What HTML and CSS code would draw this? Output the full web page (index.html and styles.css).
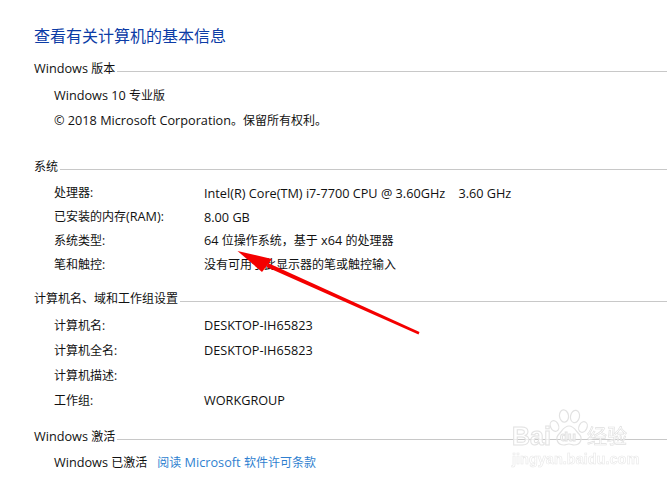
FILE: index.html
```html
<!DOCTYPE html>
<html lang="zh-CN">
<head>
<meta charset="utf-8">
<title>查看有关计算机的基本信息</title>
<link rel="stylesheet" href="styles.css">
</head>
<body>
<main class="page">
  <h1 class="title">查看有关计算机的基本信息</h1>

  <section class="section s-edition">
    <h2 class="head"><span><span class="la">Windows </span>版本</span></h2>
    <div class="plain"><span class="la">Windows 10 </span>专业版</div>
    <div class="plain"><span class="la">© 2018 Microsoft Corporation</span>。保留所有权利。</div>
  </section>

  <section class="section s-system">
    <h2 class="head"><span>系统</span></h2>
    <div class="row"><span class="key">处理器:</span><span class="la">Intel(R) Core(TM) i7-7700 CPU @ 3.60GHz&nbsp;&nbsp;&nbsp; 3.60 GHz</span></div>
    <div class="row"><span class="key">已安装的内存<span class="la">(RAM)</span>:</span><span class="la">8.00 GB</span></div>
    <div class="row"><span class="key">系统类型:</span><span><span class="la">64 </span>位操作系统，基于<span class="la"> x64 </span>的处理器</span></div>
    <div class="row"><span class="key">笔和触控:</span><span>没有可用于此显示器的笔或触控输入</span></div>
  </section>

  <section class="section s-computer">
    <h2 class="head"><span>计算机名、域和工作组设置</span></h2>
    <div class="row wide"><span class="key">计算机名:</span><span class="la">DESKTOP-IH65823</span></div>
    <div class="row wide"><span class="key">计算机全名:</span><span class="la">DESKTOP-IH65823</span></div>
    <div class="row wide"><span class="key">计算机描述:</span><span></span></div>
    <div class="row wide"><span class="key">工作组:</span><span class="la">WORKGROUP</span></div>
  </section>

  <section class="section s-activation">
    <h2 class="head"><span><span class="la">Windows </span>激活</span></h2>
    <div class="plain"><span class="la">Windows </span>已激活<a class="link" href="#">阅读<span class="la"> Microsoft </span>软件许可条款</a></div>
  </section>
</main>

<svg class="arrow" width="667" height="481" viewBox="0 0 667 481" aria-hidden="true">
  <path d="M419.5 332 L268 263 L266.5 267 L418.5 334.5 Z" fill="#f40000"/>
  <path d="M237.5 251 L272 259 L262 272 Z" fill="#f40000"/>
</svg>

<div class="mark" aria-hidden="true">
  <svg class="paw" width="40" height="38" viewBox="0 0 40 38">
    <g fill="none" stroke="#e2e2e2" stroke-width="1.2">
      <ellipse cx="5.5" cy="17" rx="4" ry="5.5" transform="rotate(-25 5.5 17)"/>
      <ellipse cx="15" cy="7" rx="4.5" ry="6.2" transform="rotate(-8 15 7)"/>
      <ellipse cx="26" cy="7.5" rx="4.5" ry="6.2" transform="rotate(12 26 7.5)"/>
      <ellipse cx="34" cy="18" rx="4" ry="5.5" transform="rotate(25 34 18)"/>
      <path d="M20 17c5 0 7 5 10 8 4 4 2 11-5 11-2 0-3-1-5-1s-3 1-5 1c-7 0-9-7-5-11 3-3 5-8 10-8z"/>
    </g>
  </svg>
  <span class="bai">Bai</span><span class="du">du</span><span class="jy">经验</span>
  <div class="url">jingyan.baidu.com</div>
</div>
</body>
</html>
```

FILE: styles.css
```css
html, body {
  margin: 0;
  padding: 0;
  background: #fff;
}
body {
  width: 667px;
  height: 481px;
  overflow: hidden;
  position: relative;
  font-family: "Open Sans", "Noto Sans CJK SC", sans-serif;
  font-size: 12px;
  color: #111;
}
.la {
  font-size: 12.7px;
  line-height: 1;
}
.row > .la {
  line-height: inherit;
}
.page {
  padding: 26px 0 0 34px;
  display: flex;
  flex-direction: column;
}
.title {
  margin: 0;
  font-size: 16px;
  font-weight: 400;
  line-height: 20px;
  color: #0c3ca6;
}
.section {
  display: flex;
  flex-direction: column;
}
.s-edition { margin-top: 13px; }
.s-system { margin-top: 24px; }
.s-computer { margin-top: 12px; }
.s-activation { margin-top: 14px; }
.head {
  margin: 0;
  font-size: 12px;
  font-weight: 400;
  line-height: 20px;
  display: flex;
  align-items: center;
  gap: 2px;
}
.head::after {
  content: "";
  flex: 1;
  height: 1px;
  background: #c8c8c8;
  margin-top: 5px;
}
.plain {
  padding-left: 20px;
  line-height: 25px;
}
.s-edition .head + .plain { margin-top: 4px; }
.s-activation .head + .plain { margin-top: 3px; }
.row {
  padding-left: 20px;
  display: grid;
  grid-template-columns: 150px 1fr;
  line-height: 24px;
}
.s-system .head { margin-bottom: 4px; }
.s-computer .head { margin-bottom: 4px; }
.row.wide { line-height: 25px; }
.link {
  margin-left: 10px;
  color: #2f7fd0;
  text-decoration: none;
}
.arrow {
  position: absolute;
  left: 0;
  top: 0;
  pointer-events: none;
}
.mark {
  position: absolute;
  left: 510px;
  top: 408px;
  width: 122px;
  height: 60px;
  font-family: "Liberation Sans", sans-serif;
  filter: blur(.3px);
}
.paw {
  position: absolute;
  left: 39px;
  top: 1px;
}
.bai, .du, .jy, .url {
  position: absolute;
  color: rgba(255, 255, 255, .7);
  -webkit-text-stroke: 1px #e2e2e2;
  font-weight: 700;
  white-space: nowrap;
}
.bai { left: 2px; top: 14px; font-size: 25px; line-height: 28px; }
.du { left: 50px; top: 21px; font-size: 13px; line-height: 16px; }
.jy {
  left: 77px;
  top: 16px;
  font-size: 20px;
  line-height: 24px;
  font-family: "Noto Sans CJK SC", sans-serif;
  font-weight: 400;
  -webkit-text-stroke: .6px #dedede;
}
.url {
  left: 2px;
  top: 42px;
  font-size: 14.5px;
  line-height: 18px;
  -webkit-text-stroke: .6px #e8e8e8;
}
```
